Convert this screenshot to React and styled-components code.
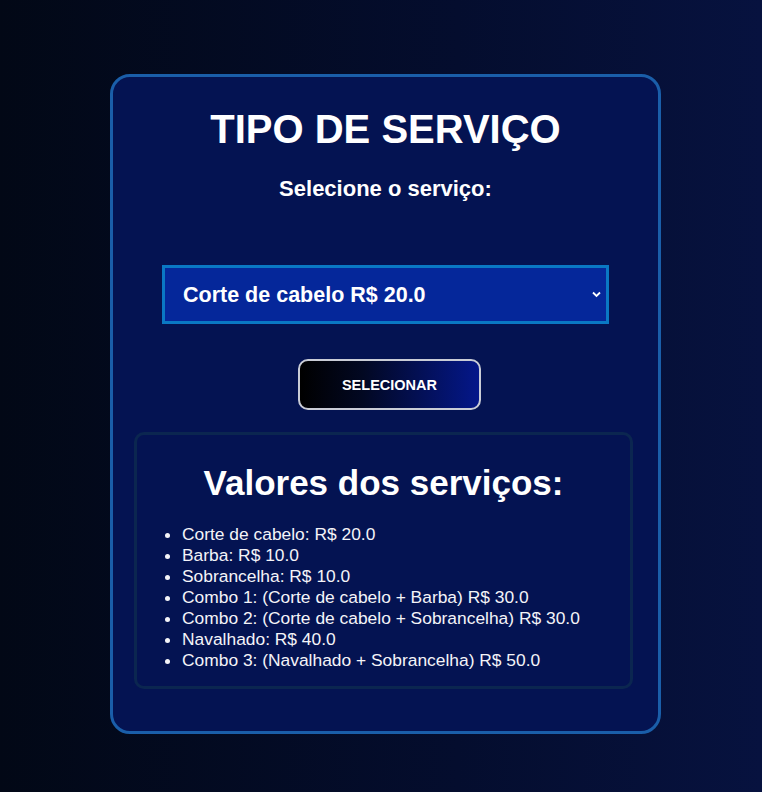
import React from "react";
import styled, { createGlobalStyle } from "styled-components";

const Global = createGlobalStyle`
  html, body { margin: 0; padding: 0; }
  body {
    min-height: 792px;
    background: linear-gradient(90deg, #020816 0%, #040d2e 60%, #07123f 100%);
    font-family: "Liberation Sans", Arial, sans-serif;
    color: #ffffff;
  }
`;

const Page = styled.div`
  display: flex;
  justify-content: center;
  padding: 74px 0 0 9px;
`;

const Card = styled.div`
  width: 545px;
  height: 654px;
  box-sizing: content-box;
  border: 3px solid #1a5ea9;
  border-radius: 20px;
  background: #041352;
  display: flex;
  flex-direction: column;
  align-items: center;
`;

const Title = styled.h1`
  margin: 28px 0 0;
  font-size: 40px;
  font-weight: 700;
  line-height: 48px;
`;

const Subtitle = styled.h3`
  margin: 24px 0 0;
  font-size: 22px;
  font-weight: 700;
  line-height: 24px;
`;

const SelectWrap = styled.div`
  position: relative;
  margin-top: 64px;
  width: 447px;
`;

const Select = styled.select`
  appearance: none;
  width: 100%;
  height: 59px;
  box-sizing: border-box;
  border: 3px solid #0a78c4;
  border-radius: 0;
  background: #05279a;
  color: #fff;
  font-family: "Liberation Sans", Arial, sans-serif;
  font-size: 21.5px;
  font-weight: 700;
  padding: 0 18px;
  outline: none;
`;

const Chevron = styled.svg`
  position: absolute;
  right: 8px;
  top: 26px;
  width: 9px;
  height: 7px;
  pointer-events: none;
`;

const Button = styled.button`
  margin: 35px 0 0 8px;
  width: 183px;
  height: 51px;
  border: 2px solid #c9ccd6;
  border-radius: 10px;
  background: linear-gradient(90deg, #000000 0%, #020822 35%, #04178a 100%);
  color: #fff;
  font-family: "Liberation Sans", Arial, sans-serif;
  font-size: 14.5px;
  font-weight: 700;
  cursor: pointer;
`;

const Box = styled.div`
  margin: 22px 4px 0 0;
  width: 493px;
  height: 251px;
  box-sizing: content-box;
  border: 3px solid #0b2650;
  border-radius: 10px;
  display: flex;
  flex-direction: column;
  align-items: center;
`;

const BoxTitle = styled.h2`
  margin: 27px 0 0;
  font-size: 35px;
  font-weight: 700;
  line-height: 41px;
`;

const List = styled.ul`
  align-self: stretch;
  margin: 21px 0 0;
  padding: 0 0 0 45px;
  font-size: 17.4px;
  line-height: 21px;
  color: #f4f4f8;
`;

const Item = styled.li``;

const items = [
  "Corte de cabelo: R$ 20.0",
  "Barba: R$ 10.0",
  "Sobrancelha: R$ 10.0",
  "Combo 1: (Corte de cabelo + Barba) R$ 30.0",
  "Combo 2: (Corte de cabelo + Sobrancelha) R$ 30.0",
  "Navalhado: R$ 40.0",
  "Combo 3: (Navalhado + Sobrancelha) R$ 50.0",
];

export default function App() {
  return (
    <>
      <Global />
      <Page>
        <Card>
          <Title>TIPO DE SERVIÇO</Title>
          <Subtitle>Selecione o serviço:</Subtitle>
          <SelectWrap>
            <Select defaultValue="corte">
              <option value="corte">Corte de cabelo R$ 20.0</option>
              <option value="barba">Barba R$ 10.0</option>
              <option value="sobrancelha">Sobrancelha R$ 10.0</option>
              <option value="combo1">Combo 1 R$ 30.0</option>
              <option value="combo2">Combo 2 R$ 30.0</option>
              <option value="navalhado">Navalhado R$ 40.0</option>
              <option value="combo3">Combo 3 R$ 50.0</option>
            </Select>
            <Chevron viewBox="0 0 9 7">
              <path d="M1 1.5 L4.5 5 L8 1.5" fill="none" stroke="#fff" strokeWidth="1.8" />
            </Chevron>
          </SelectWrap>
          <Button>SELECIONAR</Button>
          <Box>
            <BoxTitle>Valores dos serviços:</BoxTitle>
            <List>
              {items.map((t) => (
                <Item key={t}>{t}</Item>
              ))}
            </List>
          </Box>
        </Card>
      </Page>
    </>
  );
}
